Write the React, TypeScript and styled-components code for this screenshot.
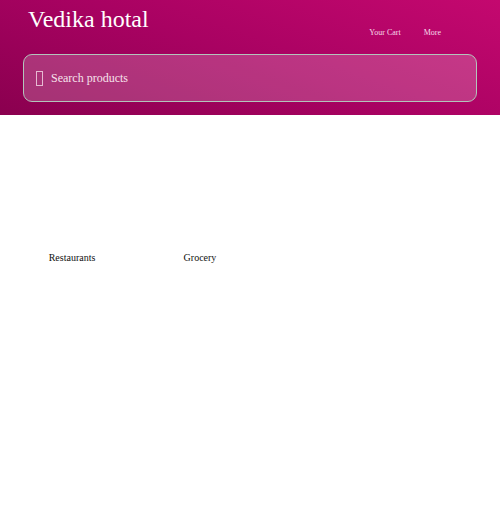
import React from 'react';
import styled, { createGlobalStyle } from 'styled-components';

const categories = ['Restaurants', 'Grocery'];

function App() {
  return (
    <>
      <GlobalStyle />
      <Page>
        <Header>
          <TopRow>
            <Brand>Vedika hotal</Brand>
            <Nav>
              <NavItem>Your Cart</NavItem>
              <NavItem>More</NavItem>
            </Nav>
          </TopRow>
          <SearchBox>
            <SearchIcon />
            <SearchInput placeholder='Search products' />
          </SearchBox>
        </Header>
        <CategoryGrid>
          {categories.map((name) => (
            <Category key={name}>
              <CategoryImage />
              <CategoryName>{name}</CategoryName>
            </Category>
          ))}
        </CategoryGrid>
      </Page>
    </>
  );
}

const GlobalStyle = createGlobalStyle`
  body {
    margin: 0;
    background: #ffffff;
    font-family: 'Liberation Serif', 'Times New Roman', serif;
  }
`;
const Page = styled.div`
  display: flex;
  flex-direction: column;
  width: 500px;
  min-height: 518px;
`;
const Header = styled.header`
  height: 115px;
  box-sizing: border-box;
  padding: 0 23px;
  background: linear-gradient(200deg, #c4086f 0%, #a90262 50%, #8a004f 100%);
  display: flex;
  flex-direction: column;
`;
const TopRow = styled.div`
  display: flex;
  flex-direction: row;
  align-items: flex-start;
  height: 54px;
`;
const Brand = styled.div`
  margin: 4px 0 0 5px;
  font-size: 24px;
  line-height: 30px;
  color: #ffffff;
`;
const Nav = styled.div`
  margin-left: auto;
  margin-right: 36px;
  margin-top: 28px;
  display: flex;
  gap: 23px;
`;
const NavItem = styled.span`
  font-size: 8px;
  line-height: 10px;
  color: #f6dbe9;
`;
const SearchBox = styled.div`
  height: 48px;
  box-sizing: border-box;
  border: 1px solid #b3c4bb;
  border-radius: 9px;
  background: rgba(255, 255, 255, 0.2);
  display: flex;
  align-items: center;
  padding-left: 12px;
  gap: 8px;
`;
const SearchIcon = styled.span`
  width: 5px;
  height: 13px;
  border: 1px solid #e6bad2;
`;
const SearchInput = styled.input`
  flex: 1;
  border: none;
  background: transparent;
  outline: none;
  font-family: 'Liberation Serif', 'Times New Roman', serif;
  font-size: 12px;
  color: #ffffff;
  padding: 0;
  &::placeholder {
    color: #f6e2ec;
  }
`;
const CategoryGrid = styled.div`
  display: flex;
  flex-direction: row;
  gap: 28px;
  padding: 0 22px;
`;
const Category = styled.div`
  width: 100px;
  display: flex;
  flex-direction: column;
  align-items: center;
`;
const CategoryImage = styled.div`
  width: 100px;
  height: 137px;
`;
const CategoryName = styled.span`
  font-size: 10px;
  line-height: 12px;
  color: #111111;
`;

export default App;
